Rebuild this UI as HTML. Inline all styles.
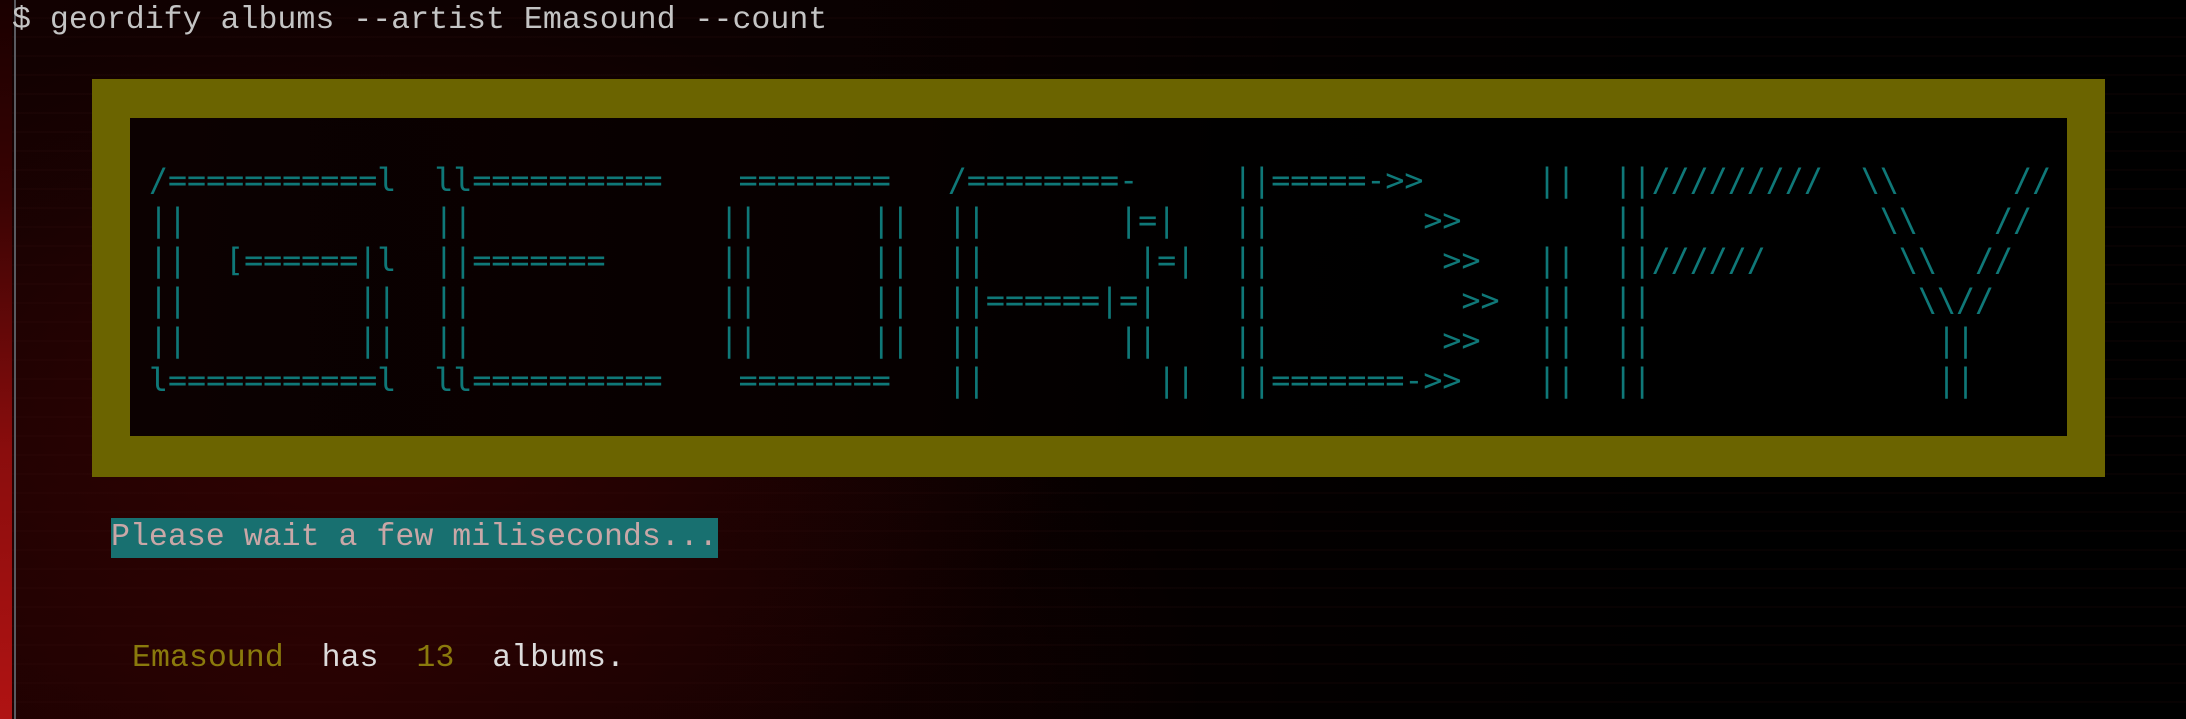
<!DOCTYPE html>
<html><head><meta charset="utf-8"><style>
html,body{margin:0;padding:0;width:2186px;height:719px;overflow:hidden;background:#000;}
body{position:relative;font-family:"Liberation Mono","DejaVu Sans Mono",monospace;font-size:31.6px;
background:
 radial-gradient(ellipse 700px 420px at 380px 420px, rgba(70,4,4,0.5), rgba(0,0,0,0) 100%),
 radial-gradient(ellipse 900px 500px at 300px 700px, rgba(50,2,2,0.55), rgba(0,0,0,0) 100%),
 linear-gradient(90deg,#120101 0px,#0c0101 700px,#030000 1300px,#000 1700px);}
.lines{position:absolute;inset:0;background:repeating-linear-gradient(180deg,rgba(0,0,0,0) 0 17px,rgba(60,20,20,0.12) 17px 19px);}
.redstrip{position:absolute;left:0;top:0;width:12px;height:719px;background:linear-gradient(180deg,#1a0000 0,#3a0303 200px,#8a0d0d 450px,#b01313 719px);}
.vline{position:absolute;left:14px;top:0;width:2px;height:719px;background:#5a5a60;}
.t{position:absolute;white-space:pre;line-height:40px;margin:0;}
#cmd{left:12px;top:1px;color:#c4c4c4;}
#outer{position:absolute;left:92px;top:79px;width:2013px;height:398px;background:#6b6400;}
#inner{position:absolute;left:130px;top:118px;width:1937px;height:318px;background:linear-gradient(90deg,#0c0101 0,#070000 700px,#010000 1100px,#000 1400px);}
#art{left:149px;top:161px;color:#0f7878;}
#wait{left:111px;top:518px;height:40px;line-height:40px;background:#187070;color:#c9a7a7;}
#res{left:132px;top:639px;color:#dcdcdc;}
.o{color:#8a7a0c;}
</style></head><body>
<div class="lines"></div>
<div class="redstrip"></div>
<div class="vline"></div>
<div class="t" id="cmd">$ geordify albums --artist Emasound --count</div>
<div id="outer"></div>
<div id="inner"></div>
<pre class="t" id="art">/===========l  ll==========    ========   /========-     ||=====->>      ||  ||/////////  \\      //
||             ||             ||      ||  ||       |=|   ||        >>        ||            \\    //
||  [======|l  ||=======      ||      ||  ||        |=|  ||         >>   ||  ||//////       \\  //
||         ||  ||             ||      ||  ||======|=|    ||          >>  ||  ||              \\//
||         ||  ||             ||      ||  ||       ||    ||         >>   ||  ||               ||
l===========l  ll==========    ========   ||         ||  ||=======->>    ||  ||               ||</pre>
<div class="t" id="wait">Please wait a few miliseconds...</div>
<div class="t" id="res"><span class="o">Emasound</span>  has  <span class="o">13</span>  albums.</div>
</body></html>
